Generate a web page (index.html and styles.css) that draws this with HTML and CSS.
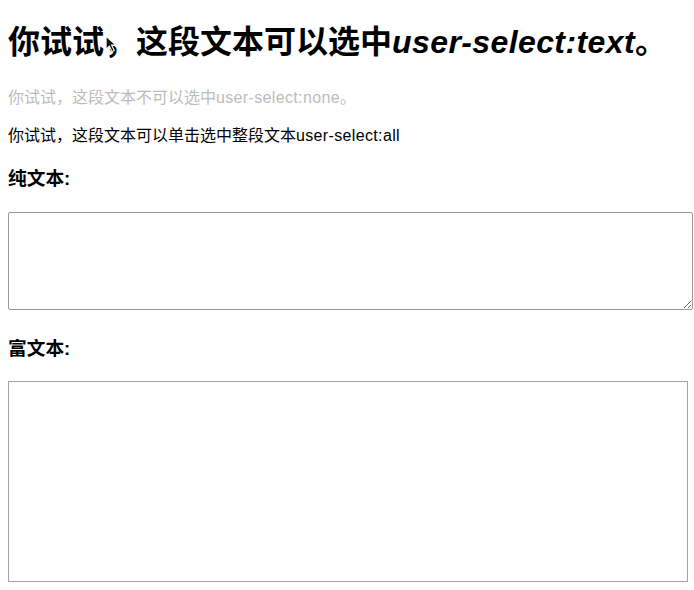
FILE: index.html
```html
<!DOCTYPE html>
<html lang="zh">
<head>
<meta charset="utf-8">
<link rel="stylesheet" href="styles.css">
</head>
<body>
<h1 class="title">你试试<span class="comma">，<svg class="cursor" width="12" height="18" viewBox="0 0 11 16"><path d="M1 1 L1 13 L4 10 L6.5 15 L8.5 14 L6 9 L10 9 Z" fill="#111" stroke="#fff" stroke-width="1"/></svg></span>这段文本可以选中<em>user-select:text</em>。</h1>
<p class="none">你试试，这段文本不可以选中<span class="latin">user-select:none</span>。</p>
<p class="all">你试试，这段文本可以单击选中整段文本<span class="latin">user-select:all</span></p>
<h3 class="label label-plain">纯文本:</h3>
<textarea class="plain"></textarea>
<h3 class="label label-rich">富文本:</h3>
<div class="rich" contenteditable="true"></div>
</body>
</html>
```
FILE: styles.css
```css
html, body {
  background: #fff;
}
body {
  margin: 0;
  padding: 0 8px;
  font-family: "Liberation Sans", "Noto Sans CJK SC", sans-serif;
  color: #000;
}
.title {
  font-size: 32px;
  line-height: 40px;
  font-weight: bold;
  margin: 22px 0 0;
  white-space: nowrap;
}
.title em {
  font-style: italic;
  letter-spacing: 0.4px;
}
.comma {
  position: relative;
}
.cursor {
  position: absolute;
  left: 1px;
  top: 11px;
}
.latin {
  letter-spacing: 0.35px;
}
.none {
  font-size: 16px;
  line-height: 20px;
  color: #bcbcbc;
  margin: 26px 0 0;
  user-select: none;
}
.all {
  font-size: 16px;
  line-height: 20px;
  margin: 18px 0 0;
  user-select: all;
}
.label {
  font-size: 18.72px;
  line-height: 22px;
  font-weight: bold;
  margin: 0;
}
.label-plain {
  margin-top: 22px;
}
.plain {
  display: block;
  box-sizing: border-box;
  width: 685px;
  height: 98px;
  margin: 22px 0 0;
  border: 1px solid #9a9a9a;
  border-radius: 2px;
  padding: 2px;
  resize: both;
  font: inherit;
}
.label-rich {
  margin-top: 28px;
}
.rich {
  box-sizing: border-box;
  width: 680px;
  height: 201px;
  margin-top: 21px;
  border: 1px solid #a4a4a4;
  outline: none;
}
```
